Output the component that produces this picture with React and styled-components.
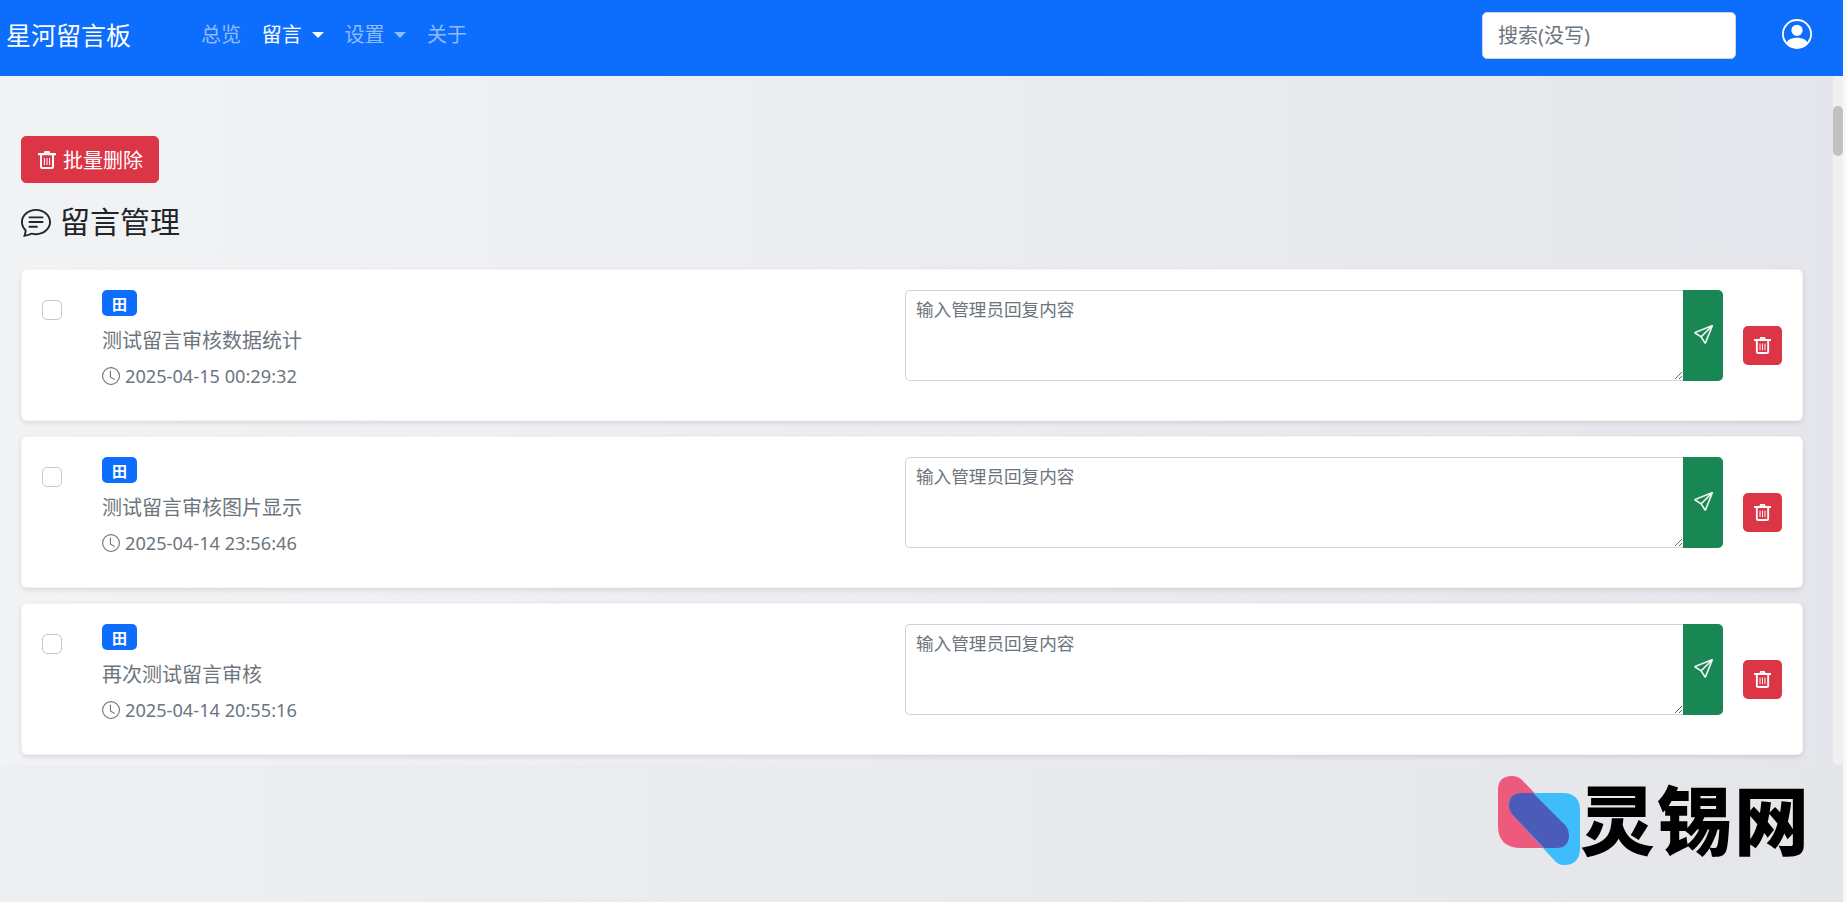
import React from 'react';
import styled, { createGlobalStyle } from 'styled-components';
import { BsChatText, BsClock, BsPersonCircle, BsSend } from 'react-icons/bs';

const fontStack = '"Noto Sans", "Noto Sans CJK SC", sans-serif';

const GlobalStyle = createGlobalStyle`
  html, body {
    margin: 0;
    height: 100%;
    overflow: hidden;
  }
  body {
    font-family: ${fontStack};
    font-size: 16px;
    color: #212529;
    background: #f8f8f8;
  }
  * { box-sizing: border-box; }
`;

const Screen = styled.div`
  width: 1843px;
  height: 902px;
  display: flex;
  flex-direction: column;
`;

const Navbar = styled.nav`
  height: 76px;
  flex: none;
  background: #0d6efd;
  display: flex;
  align-items: center;
  padding: 0 31px 0 6px;
`;

const Brand = styled.a`
  font-size: 25px;
  line-height: 30px;
  color: #fff;
  margin-right: 70px;
  margin-top: -6px;
`;

const Menu = styled.div`
  display: flex;
  gap: 20.7px;
  flex: 1;
  margin-top: -6px;
`;

const MenuItem = styled.a`
  font-size: 20px;
  line-height: 24px;
  display: flex;
  align-items: center;
  color: ${(p) => (p.$active ? '#fff' : 'rgba(255, 255, 255, 0.55)')};
  &::after {
    content: ${(p) => (p.$caret ? '""' : 'none')};
    margin-left: 10px;
    border-top: 6px solid currentColor;
    border-left: 6px solid transparent;
    border-right: 6px solid transparent;
  }
`;

const Search = styled.input`
  width: 254px;
  height: 47px;
  margin-top: -5px;
  margin-right: 46px;
  padding: 0 15px;
  font: 20px ${fontStack};
  border: 1px solid #ced4da;
  border-radius: 5px;
  background: #fff;
  &::placeholder { color: #6c757d; opacity: 1; }
`;

const Avatar = styled(BsPersonCircle)`
  width: 30px;
  height: 30px;
  color: #fff;
  margin-top: -8px;
`;

const Viewport = styled.div`
  height: 689px;
  flex: none;
  display: flex;
  overflow: hidden;
  background: linear-gradient(90deg, #f2f3f5 0%, #e5e6eb 100%);
`;

const Page = styled.div`
  flex: 1;
  min-width: 0;
`;

const Track = styled.div`
  width: 10px;
  flex: none;
  background: #f0f0f1;
  border-radius: 0 0 5px 5px;
  padding-top: 30px;
`;

const Thumb = styled.div`
  height: 50px;
  border-radius: 5px;
  background: #c1c1c1;
`;

const Main = styled.main`
  padding: 60px 30px 0 21px;
`;

const BulkButton = styled.button`
  display: flex;
  align-items: center;
  gap: 7px;
  height: 47px;
  padding: 0 15px 0 16px;
  font: 20px ${fontStack};
  color: #fff;
  background: #dc3545;
  border: 1px solid #dc3545;
  border-radius: 5px;
`;

const Heading = styled.h2`
  display: flex;
  align-items: center;
  gap: 9px;
  margin: 20px 0 28px;
  height: 38px;
  font-size: 30px;
  line-height: 38px;
  font-weight: 400;
  color: #212529;
`;

const List = styled.div`
  display: flex;
  flex-direction: column;
  gap: 15px;
`;

const Card = styled.article`
  height: 152px;
  flex: none;
  display: flex;
  padding: 20px;
  background: #fff;
  border: 1px solid rgba(0, 0, 0, 0.04);
  border-radius: 6px;
  box-shadow: 0 2px 5px rgba(0, 0, 0, 0.1);
`;

const CheckCell = styled.div`
  width: 60px;
  flex: none;
  padding-top: 10px;
`;

const Checkbox = styled.span`
  display: block;
  width: 20px;
  height: 20px;
  border: 1px solid #c4c8cc;
  border-radius: 5px;
  background: #fff;
`;

const Info = styled.div`
  flex: 1;
  min-width: 0;
`;

const Badge = styled.span`
  display: flex;
  align-items: center;
  justify-content: center;
  width: 35px;
  height: 26px;
  border-radius: 5px;
  background: #0d6efd;
  color: #fff;
  font-size: 15px;
  font-weight: 700;
`;

const Title = styled.div`
  margin-top: 10px;
  font-size: 20px;
  line-height: 30px;
  color: #6c757d;
`;

const Time = styled.div`
  margin-top: 7px;
  display: flex;
  align-items: center;
  gap: 5px;
  font-size: 18.2px;
  line-height: 26px;
  color: #6c757d;
`;

const ReplyGroup = styled.div`
  display: flex;
  width: 818px;
  height: 91px;
  flex: none;
`;

const Reply = styled.textarea`
  flex: 1;
  min-width: 0;
  padding: 6px 10px;
  font: 17.6px/24px ${fontStack};
  border: 1px solid #ced4da;
  border-right: 0;
  border-radius: 5px 0 0 5px;
  resize: vertical;
  outline: none;
  &::placeholder { color: #6c757d; opacity: 1; }
`;

const SendButton = styled.button`
  width: 40px;
  flex: none;
  padding: 0 0 3px;
  display: flex;
  align-items: center;
  justify-content: center;
  background: #198754;
  border: 0;
  border-radius: 0 5px 5px 0;
  color: #fff;
  font-size: 19px;
`;

const DeleteButton = styled.button`
  width: 39px;
  height: 39px;
  flex: none;
  align-self: center;
  margin-left: 20px;
  padding: 0;
  display: flex;
  align-items: center;
  justify-content: center;
  background: #dc3545;
  border: 0;
  border-radius: 5px;
  color: #fff;
`;

const Band = styled.div`
  flex: 1;
  display: flex;
  justify-content: flex-end;
  padding: 11px 32px 0 0;
  background: linear-gradient(90deg, #eeeff2 0%, #e5e6ea 100%);
`;

const Watermark = styled.div`
  display: flex;
  align-items: flex-start;
`;

const WatermarkText = styled.span`
  font-size: 75px;
  line-height: 88px;
  font-weight: 900;
  letter-spacing: 2px;
  color: #000;
`;

// font-awesome style can with three bars
const TrashIcon = ({ size }) => (
  <svg width={size} height={size} viewBox="0 0 18 18" fill="none" stroke="currentColor">
    <path d="M6.5 2.2 L7.2 1 H10.8 L11.5 2.2" strokeWidth="1.8" />
    <path d="M0.5 3.2 H17.5" strokeWidth="2.2" strokeLinecap="round" />
    <path d="M3 4 V15.5 Q3 17 4.5 17 H13.5 Q15 17 15 15.5 V4" strokeWidth="2" />
    <path d="M6.4 7 V14 M9 7 V14 M11.6 7 V14" strokeWidth="1" />
  </svg>
);

const LogoMark = () => (
  <svg width="82" height="89" viewBox="0 0 82 89">
    <path d="M0 14 Q0 0 14 0 Q20 0 24 4 L68 50 Q71 54 71 59 Q71 72 58 72 L24 72 Q0 72 0 50 Z" fill="#ee5a7e" />
    <path d="M24 17 L64 17 Q82 17 82 34 L82 72 Q82 89 66 89 Q60 89 56 84 L14 38 Q11 34 11 30 Q11 17 24 17 Z" fill="#3fbcfb" />
    <path d="M24 17 L35 17 L68 50 Q71 54 71 59 Q71 72 58 72 L46 72 L14 38 Q11 34 11 30 Q11 17 24 17 Z" fill="#4a5cb8" />
  </svg>
);

const messages = [
  { id: 1, title: '测试留言审核数据统计', time: '2025-04-15 00:29:32' },
  { id: 2, title: '测试留言审核图片显示', time: '2025-04-14 23:56:46' },
  { id: 3, title: '再次测试留言审核', time: '2025-04-14 20:55:16' },
];

const App = () => (
  <>
    <GlobalStyle />
    <Screen>
      <Navbar>
        <Brand>星河留言板</Brand>
        <Menu>
          <MenuItem>总览</MenuItem>
          <MenuItem $active $caret>留言</MenuItem>
          <MenuItem $caret>设置</MenuItem>
          <MenuItem>关于</MenuItem>
        </Menu>
        <Search placeholder="搜索(没写)" />
        <Avatar />
      </Navbar>
      <Viewport>
        <Page>
          <Main>
            <BulkButton><TrashIcon size={18} /> 批量删除</BulkButton>
            <Heading><BsChatText size={30} /> 留言管理</Heading>
            <List>
              {messages.map((m) => (
                <Card key={m.id}>
                  <CheckCell><Checkbox /></CheckCell>
                  <Info>
                    <Badge>田</Badge>
                    <Title>{m.title}</Title>
                    <Time><BsClock size={18} /> {m.time}</Time>
                  </Info>
                  <ReplyGroup>
                    <Reply placeholder="输入管理员回复内容" />
                    <SendButton><BsSend stroke="currentColor" strokeWidth="0.3" /></SendButton>
                  </ReplyGroup>
                  <DeleteButton><TrashIcon size={17} /></DeleteButton>
                </Card>
              ))}
            </List>
          </Main>
        </Page>
        <Track><Thumb /></Track>
      </Viewport>
      <Band>
        <Watermark>
          <LogoMark />
          <WatermarkText>灵锡网</WatermarkText>
        </Watermark>
      </Band>
    </Screen>
  </>
);

export default App;
